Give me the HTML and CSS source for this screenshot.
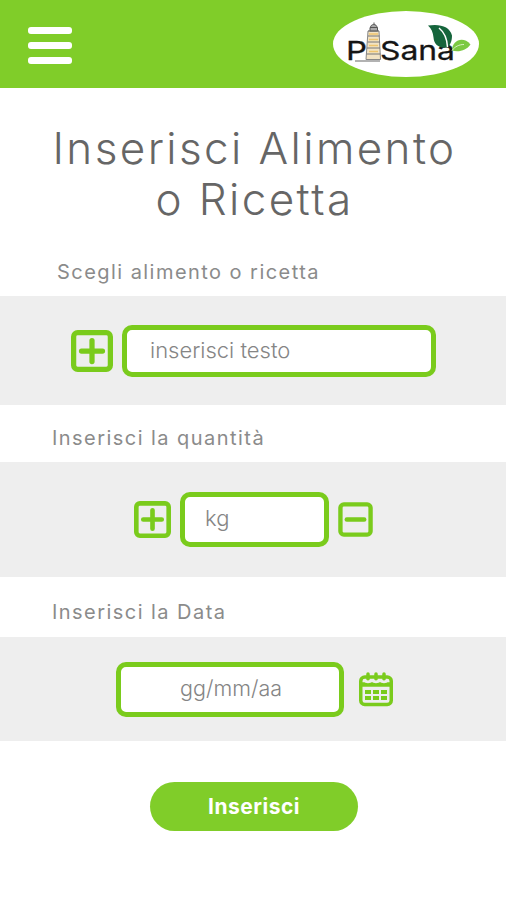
FILE: index.html
```html
<!DOCTYPE html>
<html lang="it">
    <head>
        <meta charset="utf-8">
        <meta name="viewport" content="width=device-width, initial-scale=1.0">
        <title>PiSana</title>

        <link rel="stylesheet" href="styles.css">
    </head>
    <body>
        <header class="header">
            <button class="menu" type="button" aria-label="Menu">
                <span></span>
                <span></span>
                <span></span>
            </button>
            <svg class="logo" viewBox="0 0 146 66" role="img" aria-label="PiSana">
                <ellipse cx="73" cy="33" rx="73" ry="33" fill="#fff"/>
                <path d="M22 50h25" stroke="#999" stroke-width="1.5"/>
                <!-- tower -->
                <path d="M33 48.500L35 20h11l1.500 28.500z" fill="#f2e3c4" stroke="#888"/>
                <path d="M37 20v-3.500h7.500V20zM37.500 16.500c0-4 6.500-4 6.500 0zM41 13.500v-2" fill="#aaa" stroke="#555"/>
                <path d="M35 20h11M35 25h11.500M34.500 31h12.500M34 37h13M33.500 43h14" stroke="#777"/>
                <path d="M36 23h9M36 28.500h9M36 34.500h9M36 40.500h9" stroke="#efc56e" stroke-width="1.500"/>
                <text x="13" y="49" textLength="21" lengthAdjust="spacingAndGlyphs">P</text>
                <text x="47" y="49" textLength="75" lengthAdjust="spacingAndGlyphs">Sana</text>
                <!-- leaves -->
                <path d="M95 14.500c12-2 22 1 24 10 0 6-2 10-5 12-8 1-13-3-13.500-10-.500-5-2-9-5.500-12z" fill="#15653c"/>
                <path d="M106 17c5 4 8 10 8.500 19" fill="none" stroke="#fff" stroke-width="1.500"/>
                <path d="M119 39.500c0-10 11-15 18.500-6-4 6-12 8-18.500 6z" fill="#7bc943"/>
                <path d="M119 39.500c3-4 7-6 12-6" fill="none" stroke="#d9f2c4"/>
            </svg>
        </header>
        <h1>Inserisci Alimento<br>o Ricetta</h1>
        <form>
            <label class="label-food" for="food">Scegli alimento o ricetta</label>
            <div class="band band-food">
                <svg class="icon icon-big" viewBox="0 0 36 36">
                    <rect x="2.250" y="2.250" width="31.500" height="31.500" rx="3.500"/>
                    <path d="M9 18h18M18 9v18"/>
                </svg>
                <input id="food" type="text" placeholder="inserisci testo" autocomplete="off">
            </div>
            <label class="label-quantity" for="quantity">Inserisci la quantità</label>
            <div class="band band-quantity">
                <svg class="icon" viewBox="0 0 36 36">
                    <rect x="2.250" y="2.250" width="31.500" height="31.500" rx="3.500"/>
                    <path d="M9 18h18M18 9v18"/>
                </svg>
                <input id="quantity" type="text" placeholder="kg" autocomplete="off">
                <svg class="icon icon-minus" viewBox="0 0 36 36">
                    <rect x="2.500" y="2.500" width="31" height="31" rx="3.500"/>
                    <path d="M9 18h18"/>
                </svg>
            </div>
            <label class="label-date" for="date">Inserisci la Data</label>
            <div class="band band-date">
                <input id="date" type="text" placeholder="gg/mm/aa" autocomplete="off">
                <svg class="calendar" viewBox="0 0 34 35">
                    <rect x="1.750" y="5" width="30.500" height="27.500" rx="4"/>
                    <path d="M2 12.500h30" stroke-width="4.500"/>
                    <path class="rings" d="M9 2v5M17 2v5M25 2v5"/>
                    <path class="notches" d="M5 8q4 4 8 0M13 8q4 4 8 0M21 8q4 4 8 0"/>
                    <path class="days" d="M6 20h6M14 20h6M22 20h6M6 26h6M14 26h6M22 26h6"/>
                </svg>
            </div>
            <button class="submit" type="button">Inserisci</button>
        </form>
    </body>
</html>
```
FILE: styles.css
```css
:root {
    --green: #80cd29;
    --border: #7acb1c;
    --band: #eee;
}

* {
    box-sizing: border-box;
}

body {
    margin: 0;
    min-height: 900px;
    background-color: #fff;
    color: #666;
    font-family: Inter, sans-serif;
}

.header {
    display: flex;
    justify-content: space-between;
    align-items: center;
    height: 88px;
    padding: 0 27px 0 28px;
    background-color: var(--green);
}

.menu {
    display: flex;
    flex-direction: column;
    gap: 8px;
    width: 44px;
    margin-top: 2px;
    padding: 0;
    border: 0;
    background: none;
}

.menu span {
    height: 7px;
    border-radius: 3px;
    background-color: #fff;
}

.logo {
    width: 146px;
    height: 66px;
}

.logo text {
    fill: #151515;
    stroke: #151515;
    stroke-width: 0.3px;
    font-size: 26px;
}

h1 {
    margin: 35px 0 0 3px;
    font-size: 44px;
    font-weight: 350;
    line-height: 51px;
    letter-spacing: 2.4px;
    text-align: center;
}

form {
    display: flex;
    flex-direction: column;
}

label {
    display: flex;
    align-items: center;
    padding-left: 52px;
    color: #8b8b8b;
    font-size: 20px;
    letter-spacing: 1.45px;
}

.label-food {
    height: 71px;
    padding: 23px 0 0 57px;
}

.label-quantity {
    height: 57px;
    padding-top: 9px;
}

.label-date {
    height: 60px;
    padding-top: 10px;
}

.band {
    display: flex;
    align-items: center;
    background-color: var(--band);
}

.band-food {
    height: 109px;
    padding-left: 71px;
    gap: 9px;
}

.band-quantity {
    height: 115px;
    padding-left: 134px;
    gap: 9px;
}

.band-date {
    height: 104px;
    padding-left: 116px;
    gap: 15px;
}

input {
    height: 55px;
    padding: 0 20px 3px;
    border: 5px solid var(--border);
    border-radius: 10px;
    background-color: #fff;
    color: #777;
    font-family: Inter, sans-serif;
    font-size: 22px;
    font-weight: 300;
}

input::placeholder {
    color: #858585;
}

#food {
    width: 314px;
    height: 52px;
    padding: 0 20px 1px 23px;
}

#quantity {
    width: 149px;
}

#date {
    width: 228px;
    padding-left: 22px;
    font-size: 21.5px;
    text-align: center;
}

.icon {
    width: 37px;
    height: 37px;
    fill: none;
    stroke: var(--border);
    stroke-width: 4.5;
    stroke-linecap: round;
}

.icon-big {
    width: 42px;
    height: 42px;
}

.icon-minus {
    width: 35px;
    height: 35px;
}

.calendar {
    width: 34px;
    height: 35px;
    fill: none;
    stroke: var(--border);
    stroke-width: 3.5;
}

.calendar .rings {
    stroke-linecap: round;
}

.calendar .notches {
    stroke: var(--band);
    stroke-width: 2.5;
}

.calendar .days {
    stroke-width: 4;
}

.submit {
    width: 208px;
    height: 49px;
    margin: 41px 0 0 150px;
    border: 0;
    border-radius: 25px;
    background-color: var(--green);
    color: #fff;
    font-family: Inter, sans-serif;
    font-size: 21px;
    font-weight: 700;
    letter-spacing: 0.5px;
}
```
